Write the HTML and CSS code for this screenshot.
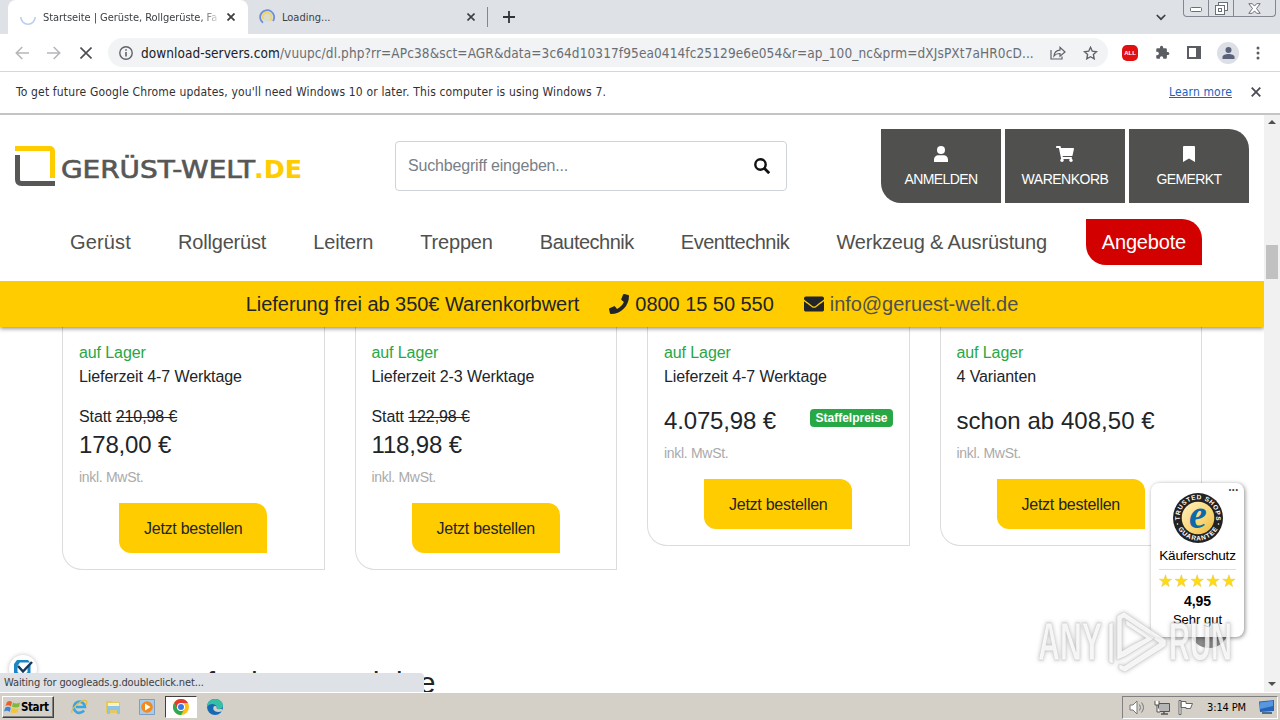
FILE: index.html
```html
<!DOCTYPE html>
<html lang="de">
<head>
  <meta charset="UTF-8">
  <meta name="viewport" content="width=device-width, initial-scale=1.0">
  <title>Startseite | Gerüste, Rollgerüste, Fahrgerüste</title>
  <link rel="stylesheet" href="styles.css">
</head>
<body>
  <!-- Tabs -->
  <div class="tabstrip">
    <div class="tab active">
      <svg class="tab-icon" width="16" height="16" viewBox="0 0 16 16" fill="none"><path d="M.8 8a7.2 7.2 0 0 0 14.4 0" stroke="#b9cff4" stroke-width="1.6"/></svg>
      <span class="tab-title fade">Startseite | Gerüste, Rollgerüste, Fa</span>
      <svg class="tab-close" width="8" height="8" viewBox="0 0 8 8"><path d="M.5.5l7 7M7.5.5l-7 7" stroke="#3c4043" stroke-width="1.8"/></svg>
    </div>
    <div class="tab">
      <svg class="tab-icon" width="16" height="16" viewBox="0 0 16 16" fill="none"><circle cx="8" cy="8" r="4.5" fill="#d9dccf"/><path d="M4 10a4.5 4.5 0 1 1 7 1.5" stroke="#ecd66d" stroke-width="2"/><path d="M4 13.8A7 7 0 1 1 14 12" stroke="#6e8fd8" stroke-width="1.8"/></svg>
      <span class="tab-title">Loading...</span>
      <svg class="tab-close" width="8" height="8" viewBox="0 0 8 8"><path d="M.5.5l7 7M7.5.5l-7 7" stroke="#3c4043" stroke-width="1.6"/></svg>
    </div>
    <span class="tab-sep"></span>
    <svg class="new-tab" width="12" height="12" viewBox="0 0 12 12"><path d="M6 0v12M0 6h12" stroke="#303338" stroke-width="1.8"/></svg>
    <svg class="tab-search" width="10" height="7" viewBox="0 0 10 7" fill="none"><path d="M.8 1L5 5.2 9.2 1" stroke="#3c4043" stroke-width="1.7"/></svg>
    <div class="win-buttons">
      <span class="win-min"><svg width="13" height="6" viewBox="0 0 13 6" fill="#fff"><rect x=".5" y=".5" width="11" height="4" rx="1" stroke="#6b6f78"/></svg></span>
      <span class="win-max"><svg width="13" height="13" viewBox="0 0 13 13" fill="#fff" stroke="#6b6f78"><rect x="3.500" y=".5" width="9" height="8"/><rect x=".5" y="3.500" width="9" height="9"/><rect x="3.500" y="6.500" width="3" height="3"/></svg></span>
      <span class="win-close"><svg width="13" height="11" viewBox="0 0 13 11"><path d="M.8.7h3.500l2.200 2.400L8.700.7h3.500L8.500 5.500l3.700 4.800H8.700L6.500 7.900l-2.200 2.400H.8l3.700-4.800z" fill="#fff" stroke="#6b6f78"/></svg></span>
    </div>
  </div>

  <!-- Toolbar -->
  <div class="toolbar">
    <svg width="14" height="14" viewBox="0 0 14 14" fill="none" stroke="#b5b7ba" stroke-width="1.6"><path d="M14 7H1.500M7.300 1L1.300 7l6 6"/></svg>
    <svg width="14" height="14" viewBox="0 0 14 14" fill="none" stroke="#b5b7ba" stroke-width="1.6"><path d="M0 7h12.500M6.700 1l6 6-6 6"/></svg>
    <svg width="12" height="12" viewBox="0 0 12 12" stroke="#4a4d51" stroke-width="1.6"><path d="M.5.5l11 11M11.500.5l-11 11"/></svg>
    <div class="omnibox">
      <svg width="14" height="14" viewBox="0 0 14 14" fill="none" stroke="#5f6368"><circle cx="7" cy="7" r="6.200" stroke-width="1.4"/><path d="M7 6v4.500M7 3.300v1.500" stroke-width="1.600"/></svg>
      <span class="url"><b>download-servers.com</b><i>/vuupc/dl.php?rr=APc38&amp;sct=AGR&amp;data=3c64d10317f95ea0414fc25129e6e054&amp;r=ap_100_nc&amp;prm=dXJsPXt7aHR0cD...</i></span>
      <svg class="share" width="16" height="14" viewBox="0 0 16 14" fill="none" stroke="#5f6368" stroke-width="1.200"><path d="M1 4v9h11v-2.500M4 10c.4-4 3-5.600 6-5.800V1.300L15 6l-5 4.300V7.500C7.500 7.400 5.500 8 4 10z"/></svg>
      <svg width="15" height="14" viewBox="0 0 15 14" fill="none" stroke="#5f6368" stroke-width="1.400"><path d="M7.500 1.300l1.800 3.900 4.200.5-3.100 2.900.8 4.200-3.700-2.100-3.700 2.100.8-4.200-3.100-2.900 4.200-.5z"/></svg>
    </div>
    <div class="extensions">
      <span class="adblock">ALL</span>
      <svg width="15" height="15" viewBox="0 0 24 24" fill="#5a5d62"><path d="M20.500 11H19V7a2 2 0 0 0-2-2h-4V3.500a2.500 2.500 0 0 0-5 0V5H4a2 2 0 0 0-2 2v3.800h1.500a2.700 2.700 0 0 1 0 5.400H2V20a2 2 0 0 0 2 2h3.800v-1.500a2.700 2.700 0 0 1 5.400 0V22H17a2 2 0 0 0 2-2v-4h1.500a2.500 2.500 0 0 0 0-5z"/></svg>
      <svg width="14" height="13" viewBox="0 0 14 13"><path d="M1 1h12v11H1z" fill="#fff" stroke="#5a5d62" stroke-width="2"/><path d="M9 0h5v13H9z" fill="#5a5d62"/></svg>
      <span class="avatar"><svg width="13" height="12" viewBox="0 0 13 12" fill="#5a6178"><circle cx="6.500" cy="3" r="3"/><path d="M.5 12v-2c0-2 3-3 6-3s6 1 6 3v2z"/></svg></span>
      <svg width="4" height="14" viewBox="0 0 4 14" fill="#5a5d62"><circle cx="2" cy="2" r="1.500"/><circle cx="2" cy="7" r="1.500"/><circle cx="2" cy="12" r="1.500"/></svg>
    </div>
  </div>

  <div class="infobar">
    <span class="info-text">To get future Google Chrome updates, you'll need Windows 10 or later. This computer is using Windows 7.</span>
    <a href="#">Learn more</a>
    <svg width="10" height="10" viewBox="0 0 10 10"><path d="M.7.7l8.600 8.600M9.300.7L.7 9.300" stroke="#4a4d51" stroke-width="1.800"/></svg>
  </div>

  <div class="viewport">
    <div class="page">
      <header>
        <div class="header-top">
          <svg class="logo" width="288" height="42" viewBox="0 0 288 42" fill="none">
            <path d="M0 2.500h34.500q3 0 3 3V32" stroke="#fc0" stroke-width="5"/>
            <path d="M2.500 9v24.500q0 4 4 4H40" stroke="#575756" stroke-width="5"/>
            <text x="46" y="31.500" textLength="194" lengthAdjust="spacingAndGlyphs" fill="#575756" stroke="#575756" stroke-width=".7" class="logo-text">GERÜST-WELT</text>
            <text x="239" y="31.500" textLength="48" lengthAdjust="spacingAndGlyphs" fill="#fc0" class="logo-text bold">.DE</text>
          </svg>
          <div class="search">
            <span>Suchbegriff eingeben...</span>
            <svg width="16" height="16" viewBox="0 0 16 16" fill="none" stroke="#111"><circle cx="6.500" cy="6.500" r="5.200" stroke-width="2.400"/><path d="M10.300 10.300l4.900 4.900" stroke-width="2.800"/></svg>
          </div>
          <div class="user-buttons">
            <a class="user-btn first">
              <svg width="14" height="16" viewBox="0 0 14 16" fill="#fff"><circle cx="7" cy="4" r="4"/><path d="M0 16v-2.500C0 11 2 9.300 4.200 9.300h5.600C12 9.300 14 11 14 13.500V16z"/></svg>
              <span>ANMELDEN</span>
            </a>
            <a class="user-btn">
              <svg width="18" height="16" viewBox="0 0 576 512" fill="#fff"><path d="M528.100 301.300l47.300-208C578.800 78.300 567.400 64 552 64H159.200l-9.200-44.800C147.800 8 137.900 0 126.500 0H24C10.700 0 0 10.700 0 24v16c0 13.300 10.700 24 24 24h69.900l70.200 343.400C147.300 417.100 136 435.200 136 456c0 30.900 25.100 56 56 56s56-25.100 56-56c0-15.700-6.400-29.800-16.800-40h209.600C430.400 426.200 424 440.300 424 456c0 30.900 25.100 56 56 56s56-25.100 56-56c0-22.200-12.900-41.300-31.600-50.400l5.500-24.300c3.400-15-8-29.300-23.400-29.300H218.100l-6.500-32h293.100c11.200 0 20.900-7.800 23.400-18.700z"/></svg>
              <span>WARENKORB</span>
            </a>
            <a class="user-btn last">
              <svg width="12" height="16" viewBox="0 0 12 16" fill="#fff"><path d="M1 0h10a1 1 0 0 1 1 1v15l-6-3.500L0 16V1a1 1 0 0 1 1-1z"/></svg>
              <span>GEMERKT</span>
            </a>
          </div>
        </div>
        <nav>
          <a class="wide">Gerüst</a>
          <a>Rollgerüst</a>
          <a>Leitern</a>
          <a>Treppen</a>
          <a class="narrow">Bautechnik</a>
          <a class="narrow">Eventtechnik</a>
          <a>Werkzeug &amp; Ausrüstung</a>
          <a class="angebote">Angebote</a>
        </nav>
        <div class="usp-bar">
          <span>Lieferung frei ab 350€ Warenkorbwert</span>
          <span class="usp-item"><svg width="20" height="20" viewBox="0 0 512 512" fill="#212529"><path d="M493.400 24.600l-104-24c-11.300-2.600-22.900 3.300-27.500 13.900l-48 112c-4.200 9.800-1.400 21.300 6.900 28l60.600 49.600c-36 76.700-98.900 140.500-177.200 177.200l-49.600-60.600c-6.800-8.300-18.200-11.100-28-6.900l-112 48C3.900 366.500-2 378.100.6 389.400l24 104C27.100 504.200 36.700 512 48 512c256.100 0 464-207.500 464-464 0-11.200-7.700-20.900-18.600-23.400z"/></svg>0800 15 50 550</span>
          <span class="usp-item"><svg width="20" height="20" viewBox="0 0 512 512" fill="#212529"><path d="M502.300 190.800c3.900-3.100 9.700-.2 9.700 4.700V400c0 26.500-21.500 48-48 48H48c-26.500 0-48-21.500-48-48V195.600c0-5 5.700-7.800 9.700-4.700 22.400 17.400 52.100 39.500 154.100 113.600 21.100 15.400 56.700 47.800 92.200 47.600 35.700.3 72-32.800 92.300-47.600 102-74.100 131.600-96.300 154-113.700zM256 320c23.200.4 56.600-29.200 73.400-41.400 132.700-96.300 142.800-104.700 173.400-128.700 5.800-4.500 9.200-11.500 9.200-18.900v-19c0-26.500-21.500-48-48-48H48c-26.500 0-48 21.500-48 48v19c0 7.400 3.400 14.300 9.200 18.900 30.600 23.900 40.700 32.400 173.400 128.700 16.800 12.200 50.200 41.800 73.400 41.400z"/></svg><a>info@geruest-welt.de</a></span>
        </div>
      </header>

      <main>
        <div class="products">
          <div class="card">
            <p class="stock">auf Lager</p>
            <p>Lieferzeit 4-7 Werktage</p>
            <p class="old">Statt <s>210,98 €</s></p>
            <div class="price-row after-old"><span class="price">178,00 €</span></div>
            <p class="tax">inkl. MwSt.</p>
            <a class="order">Jetzt bestellen</a>
          </div>
          <div class="card">
            <p class="stock">auf Lager</p>
            <p>Lieferzeit 2-3 Werktage</p>
            <p class="old">Statt <s>122,98 €</s></p>
            <div class="price-row after-old"><span class="price">118,98 €</span></div>
            <p class="tax">inkl. MwSt.</p>
            <a class="order">Jetzt bestellen</a>
          </div>
          <div class="card">
            <p class="stock">auf Lager</p>
            <p>Lieferzeit 4-7 Werktage</p>
            <div class="price-row"><span class="price">4.075,98 €</span><span class="badge">Staffelpreise</span></div>
            <p class="tax">inkl. MwSt.</p>
            <a class="order">Jetzt bestellen</a>
          </div>
          <div class="card">
            <p class="stock">auf Lager</p>
            <p>4 Varianten</p>
            <div class="price-row"><span class="price from">schon ab 408,50 €</span></div>
            <p class="tax">inkl. MwSt.</p>
            <a class="order">Jetzt bestellen</a>
          </div>
        </div>
        <h2>BG Bau geförderte Produkte</h2>
      </main>
    </div>
    <div class="scrollbar">
      <svg width="8" height="4" viewBox="0 0 8 4" fill="#505050"><path d="M4 0l4 4H0z"/></svg>
      <span class="thumb"></span>
      <svg width="8" height="4" viewBox="0 0 8 4" fill="#505050"><path d="M0 0h8L4 4z"/></svg>
    </div>

    <!-- Consent button -->
    <div class="consent">
      <svg width="22" height="20" viewBox="0 0 22 20" fill="none"><path d="M5 1h11l2 2.500H8L5.500 7v6l5 4 5-4V9l3-4v9l-8 6-8.500-6V5z" fill="#1b86c4"/><path d="M6 7l5 5.500L20 3" stroke="#14395c" stroke-width="2.500"/></svg>
    </div>

    <!-- Trusted Shops -->
    <span class="to-top"></span>
    <div class="trusted">
      <span class="dots">•••</span>
      <svg width="50" height="50" viewBox="0 0 50 50">
        <defs>
          <linearGradient id="gold" x1="0" y1="0" x2="1" y2="1"><stop offset="0" stop-color="#fff0bd"/><stop offset=".6" stop-color="#f9d675"/><stop offset="1" stop-color="#eeb73a"/></linearGradient>
          <path id="arcTop" d="M7 28a18.300 18.300 0 1 1 36 0"/>
          <path id="arcBottom" d="M2.700 29a22.700 22.700 0 0 0 44.600 0"/>
        </defs>
        <circle cx="25" cy="25" r="25" fill="#222"/>
        <circle cx="25" cy="25" r="16.300" fill="url(#gold)"/>
        <text class="seal"><textPath href="#arcTop" startOffset="1" textLength="62">TRUSTED SHOPS</textPath></text>
        <text class="seal"><textPath href="#arcBottom" startOffset="7" textLength="48">GUARANTEE</textPath></text>
        <circle cx="4.500" cy="31" r=".8" fill="#fff"/><circle cx="45.500" cy="31" r=".8" fill="#fff"/>
        <text x="16" y="35" class="seal-e">e</text>
      </svg>
      <p class="ts-label">Käuferschutz</p>
      <div class="stars">
        <svg width="77" height="14" viewBox="0 0 77 14" fill="#ffdc0f" stroke="#e0bc38" stroke-width=".4">
          <defs><path id="star" d="M7 .8l1.500 4.400h4.700l-3.800 2.800 1.400 4.600L7 9.900l-3.800 2.700L4.600 8 .8 5.200h4.700z"/></defs>
          <use href="#star" x="-.5"/><use href="#star" x="15.300"/><use href="#star" x="31.200"/><use href="#star" x="47"/><use href="#star" x="62.900"/>
        </svg>
      </div>
      <p class="score">4,95</p>
      <p class="rating">Sehr gut</p>
    </div>

    <svg class="watermark" width="202" height="70" viewBox="0 0 202 70">
      <g fill="#fff" fill-opacity=".8" stroke="#c4c4c4" stroke-opacity=".6" stroke-width=".8">
        <text x="4" y="53" textLength="64" lengthAdjust="spacingAndGlyphs">ANY</text>
        <text x="135" y="53" textLength="63" lengthAdjust="spacingAndGlyphs">RUN</text>
        <path d="M75 17l4-2v42l-4-2zM83 9l7-4 42 28v6L91 65l-6-3v-5l5 2 35-23-35-25-2 1v32l10-6 14-7-20-13v-5l29 18-29 18-9 4z"/>
      </g>
    </svg>

    <div class="status">Waiting for googleads.g.doubleclick.net...</div>
  </div>

  <!-- Taskbar -->
  <div class="taskbar">
    <div class="start">
      <svg width="17" height="15" viewBox="0 0 17 15"><path d="M3 2q3-2 5 0L7 6.500q-3-2-5.500-.5z" fill="#e8602a"/><path d="M9 2.500q3 2 7 0L15 7q-4 1-7-.3z" fill="#7fb93c"/><path d="M1.300 7.500q3-1.500 5.500.3L5.700 12q-2-2-5.700-.5z" fill="#3d86d4"/><path d="M7.800 8q3 1.500 7 .2l-1.300 4q-4 1.500-7 0z" fill="#f6c52f"/></svg>
      <span>Start</span>
    </div>
    <div class="apps">
      <span class="app"><svg width="17" height="17" viewBox="0 0 17 17" fill="none"><path d="M13 11.500A5.600 5.600 0 1 1 14 8H5" stroke="#3aa5e2" stroke-width="2.600"/><path d="M1 14C-1 10 12-1 15.500 2c1 1 .3 2.500-.5 4" stroke="#e8bd3c" stroke-width="1.300"/></svg></span>
      <span class="app"><svg width="17" height="16" viewBox="0 0 17 16"><path d="M1 2h6l1 1h7v11H1z" fill="#e5c860"/><path d="M3 4h11v5H3z" fill="#fff3b9"/><path d="M2 7h13v8h-3v-4H5v4H2z" fill="#8cc5e8"/></svg></span>
      <span class="app"><svg width="16" height="16" viewBox="0 0 16 16"><path d="M.5.5h15v15H.5z" fill="#a9cbed" stroke="#7f9fc2"/><circle cx="8" cy="8" r="5.800" fill="#f28a1c"/><path d="M6 4.500v7L11.500 8z" fill="#fff"/></svg></span>
      <span class="app current"><svg width="16" height="16" viewBox="0 0 16 16"><circle cx="8" cy="8" r="8" fill="#fbc116"/><path d="M1.070 4A8 8 0 0 1 14.930 4H8L4.500 10z" fill="#e33b2e"/><path d="M1.070 4A8 8 0 0 0 8 16l3.500-6-3.500 2-3.500-2z" fill="#2da94f"/><circle cx="8" cy="8" r="4" fill="#fff"/><circle cx="8" cy="8" r="3" fill="#3b78e7"/></svg></span>
      <span class="app"><svg width="16" height="16" viewBox="0 0 16 16"><circle cx="8" cy="8" r="8" fill="#1769b5"/><path d="M0 8C0 3 4 0 8 0c5 0 8 3 8 6.500 0 2.500-2 3.500-4 3.500-3 0-2.500-1-2.300-2C9.500 5 3 3 0 8z" fill="#35c0a6"/><path d="M6.500 8c-1 3 1.500 6 8 4.500C16 12 16 10 14 10c-4 .5-5-.5-4.300-2C9 6.500 7 7 6.500 8z" fill="#d4d0c8"/></svg></span>
    </div>
    <div class="tray">
      <svg width="17" height="15" viewBox="0 0 17 15" fill="#fff" stroke="#777"><path d="M1 5h3l4-4v13l-4-4H1z"/><path d="M10.500 4.500q2 3 0 6M12.500 2.500q4 5 0 10" fill="none"/></svg>
      <svg width="16" height="15" viewBox="0 0 16 15" stroke="#555"><path d="M4.500 3.500h11v8h-11z" fill="#b5b5b5"/><path d="M7 14h7M10 12v2" stroke-width="1.500"/><path d="M1 1v4h4V1M3 5v7h3" fill="#fff"/></svg>
      <svg width="16" height="15" viewBox="0 0 16 15" fill="#fff" stroke="#666"><path d="M1 .5h2v14H1zM3 1.500h5v2h6.500l-2 5H8v-1H3z"/></svg>
      <span class="clock">3:14 PM</span>
      <svg width="16" height="14" viewBox="0 0 16 14"><path d="M0 1.500L15 0v11L1 12z" fill="#2565b8"/><path d="M1 2.500L14 1v5L1 9z" fill="#5897de"/><path d="M3 13h10" stroke="#244a80" stroke-width="1.500"/></svg>
    </div>
  </div>
</body>
</html>
```
FILE: styles.css
```css
/* Reset */
* { box-sizing: border-box; margin: 0; padding: 0; }
body { width: 1280px; height: 720px; overflow: hidden; background: #fff; font-family: "Liberation Sans", Arial, sans-serif; color: #212529; display: flex; flex-direction: column; }
svg { display: block; flex: none; }
span, p, a { white-space: nowrap; }

/* Tabs */
.tabstrip { height: 34px; flex: none; background: #dee1e6; display: flex; align-items: center; padding-left: 8px; font: 11px "DejaVu Sans Condensed", "DejaVu Sans", sans-serif; color: #3c4043; }
.tab { width: 239px; height: 34px; display: flex; align-items: center; padding: 0 12px 0 11px; }
.tab.active { width: 240px; padding-left: 12px; background: #fff; border-radius: 8px 8px 0 0; }
.tab-icon { margin-right: 7px; }
.tab-title { flex: 1; overflow: hidden; letter-spacing: 0; }
.tab-title.fade { max-width: 176px; letter-spacing: -0.05px; -webkit-mask-image: linear-gradient(to right, #000 158px, transparent 178px); }
.tab-close { margin-left: 8px; }
.tab-sep { width: 1px; height: 20px; background: #83878d; }
.new-tab { margin-left: 15px; }
.tab-search { margin-left: auto; margin-right: 17px; }
.win-buttons { align-self: flex-start; display: flex; height: 17px; width: 93px; border: 1px solid #83878f; border-top: none; border-radius: 0 0 4px 4px; margin-right: 4px; }
.win-buttons span { display: flex; align-items: center; justify-content: center; width: 25px; border-right: 1px solid #83878f; }
.win-buttons .win-min { padding-top: 4px; }
.win-buttons .win-close { flex: 1; border-right: none; }

/* Toolbar */
.toolbar { height: 38px; flex: none; display: flex; align-items: center; padding: 0 20px 0 15px; border-bottom: 1px solid #d5d7da; }
.toolbar > svg { margin-right: 18px; }
.toolbar > svg:nth-of-type(3) { margin: 0 16px 0 1px; }
.omnibox { width: 1000px; height: 29px; border-radius: 15px; background: #f1f3f4; display: flex; align-items: center; padding: 0 10px 0 11px; margin-right: 14px; }
.url { width: 896px; margin-left: 8px; font: 13.500px "DejaVu Sans Condensed", "DejaVu Sans", sans-serif; display: flex; }
.url b, .url i { font-weight: normal; font-style: normal; }
.url b { color: #202124; letter-spacing: 0.06px; }
.url i { color: #6a6e73; letter-spacing: 0.11px; }
.share { margin: 0 17px 0 auto; }
.extensions { display: flex; align-items: center; flex: 1; justify-content: space-between; }
.adblock { width: 16px; height: 16px; border-radius: 5px; background: #e01010; color: #fff; font: bold 6px/17px "Liberation Sans", Arial, sans-serif; text-align: center; }
.avatar { width: 22px; height: 22px; border-radius: 50%; background: #dcdfe5; display: flex; align-items: center; justify-content: center; }

.infobar { height: 41px; flex: none; display: flex; align-items: center; padding: 0 19px 2px 16px; font: 12px "DejaVu Sans Condensed", "DejaVu Sans", sans-serif; color: #303134; }
.info-text { letter-spacing: 0.16px; }
.infobar a { margin-left: auto; margin-right: 19px; color: #1a63c0; text-decoration: underline; letter-spacing: 0.15px; }

/* Page */
.viewport { position: relative; height: 579px; flex: none; display: flex; overflow: hidden; border-top: 2px solid #c4c4c4; }
.page { width: 1264px; overflow: hidden; }
header { position: relative; background: #fff; box-shadow: 0 2px 4px rgba(0,0,0,.4); }
.header-top { display: flex; align-items: flex-start; height: 104px; padding: 14px 15px 0; }
.logo { margin-top: 17px; }
.logo-text { font: 25px "DejaVu Sans", sans-serif; }
.logo-text.bold { font-weight: bold; }
.search { display: flex; align-items: center; justify-content: space-between; width: 392px; height: 50px; margin: 12px 94px 0 92px; padding: 0 16px 0 12px; border: 1px solid #ced4da; border-radius: 4px; color: #7a8087; font-size: 16px; line-height: 20px; letter-spacing: -0.18px; }
.user-buttons { display: flex; gap: 4px; }
.user-btn { width: 120px; height: 74px; background: #50504e; color: #fff; font-size: 14px; letter-spacing: -0.6px; display: flex; flex-direction: column; align-items: center; padding-top: 17px; gap: 9px; }
.user-btn:nth-child(2) { letter-spacing: -0.5px; }
.user-btn.first { border-bottom-left-radius: 20px; }
.user-btn.last { border-top-right-radius: 20px; }

nav { display: flex; align-items: center; height: 46px; margin: 0 62px 16px; padding-left: 8px; justify-content: space-between; font-size: 20px; letter-spacing: -0.18px; color: #50504e; }
nav .wide { letter-spacing: 0.15px; }
nav .narrow { letter-spacing: -0.5px; }
nav .angebote { background: #d30000; color: #fff; width: 116px; height: 46px; line-height: 46px; text-align: center; border-radius: 0 20px 0 20px; margin-left: -8px; }
.usp-bar { height: 46px; background: #fc0; display: flex; align-items: center; justify-content: center; gap: 30px; font-size: 20px; letter-spacing: -0.04px; }
.usp-item { display: flex; align-items: center; gap: 6px; }
.usp-item a { color: #50504e; }

/* Products */
.products { display: grid; grid-template-columns: repeat(4, 1fr); gap: 30px; align-items: start; margin: 0 62px; height: 243px; }
.card { border: 1px solid #dcdcdc; border-top: none; border-bottom-left-radius: 20px; padding: 14px 16px 16px; font-size: 16px; line-height: 24px; letter-spacing: -0.1px; }
.stock { color: #28a745; }
.old { margin-top: 16px; }
.price-row { display: flex; justify-content: space-between; height: 29px; margin-top: 17px; }
.price-row.after-old { margin-top: 1px; }
.price { font-size: 24px; line-height: 29px; letter-spacing: -0.15px; }
.price.from { letter-spacing: 0.04px; }
.badge { height: 18px; padding: 0 5px; border-radius: 4px; background: #28a745; color: #fff; font-size: 12px; font-weight: bold; line-height: 18px; letter-spacing: 0; margin-top: 3px; }
.tax { color: #aaa; font-size: 14px; line-height: 20px; margin-top: 8px; letter-spacing: -0.3px; }
.order { display: block; width: 148px; height: 50px; margin: 16px auto 0; background: #fc0; line-height: 52px; text-align: center; letter-spacing: -0.25px; border-radius: 0 12px 0 12px; }
h2 { margin: 96px 62px 0; font-size: 29.600px; line-height: 34px; font-weight: normal; }

.scrollbar { width: 16px; background: #f1f1f1; display: flex; flex-direction: column; align-items: center; padding: 5px 0 6px; }
.thumb { width: 12px; height: 34px; background: #c1c1c1; margin: 121px 0 auto; }

/* Floating elements */
.consent { position: absolute; left: 9px; top: 540px; width: 28px; height: 28px; border-radius: 50%; background: #fff; box-shadow: 0 0 4px rgba(0,0,0,.25); display: flex; align-items: center; justify-content: center; }
.to-top { position: absolute; left: 1189px; top: 492px; width: 40px; height: 41px; border-radius: 50%; background: #8d8d8d; }
.trusted { position: absolute; left: 1151px; top: 368px; width: 93px; height: 154px; background: #fff; border-radius: 8px; box-shadow: 1px 1px 4px rgba(0,0,0,.45); display: flex; flex-direction: column; align-items: center; padding-top: 10px; color: #000; font-size: 14px; }
.dots { position: absolute; right: 5px; top: 2px; font-size: 7px; line-height: 10px; color: #333; letter-spacing: 1px; }
.seal { font: bold 6.500px "Liberation Sans", Arial, sans-serif; fill: #fff; }
.seal-e { font: italic bold 40px "Liberation Serif", serif; fill: #0b6aa8; }
.ts-label { line-height: 16px; margin-top: 5px; font-size: 13.500px; letter-spacing: -0.2px; }
.stars { border-top: 1px solid #ddd; width: 77px; margin-top: 5px; padding-top: 4px; }
.score { font-weight: bold; line-height: 18px; margin-top: 4px; }
.rating { line-height: 19px; font-size: 13px; }
.watermark { position: absolute; left: 1034px; top: 492px; font: bold 53px "Liberation Sans", Arial, sans-serif; filter: drop-shadow(0 0 2px rgba(0,0,0,.3)); }
.status { position: absolute; left: 0; bottom: 0; width: 424px; height: 19px; background: #dee1e6; border-top-right-radius: 4px; padding: 0 4px; font: 11px/20px "DejaVu Sans Condensed", "DejaVu Sans", sans-serif; color: #3c4043; letter-spacing: -0.13px; }

/* Taskbar */
.taskbar { flex: 1; background: #d4d0c8; border-top: 1px solid #fff; display: flex; align-items: center; padding: 1px 2px 0; font-family: "DejaVu Sans Condensed", "DejaVu Sans", sans-serif; color: #000; }
.start { width: 52px; height: 22px; display: flex; align-items: center; padding-left: 1px; border: 1px solid; border-color: #fff #404040 #404040 #fff; box-shadow: inset -1px -1px #808080; font-size: 11.500px; font-weight: bold; letter-spacing: -0.4px; }
.apps { display: flex; margin-left: 9px; gap: 2px; }
.app { width: 32px; height: 22px; display: flex; align-items: center; justify-content: center; }
.app.current { background: #fff; border: 1px solid; border-color: #404040 #fff #fff #404040; }
.tray { margin-left: auto; width: 156px; height: 23px; border: 1px solid; border-color: #808080 #fff #fff #808080; display: flex; align-items: center; padding: 0 2px 0 6px; gap: 8px; }
.clock { font-size: 11px; letter-spacing: -0.15px; margin: 0 auto; }
```
